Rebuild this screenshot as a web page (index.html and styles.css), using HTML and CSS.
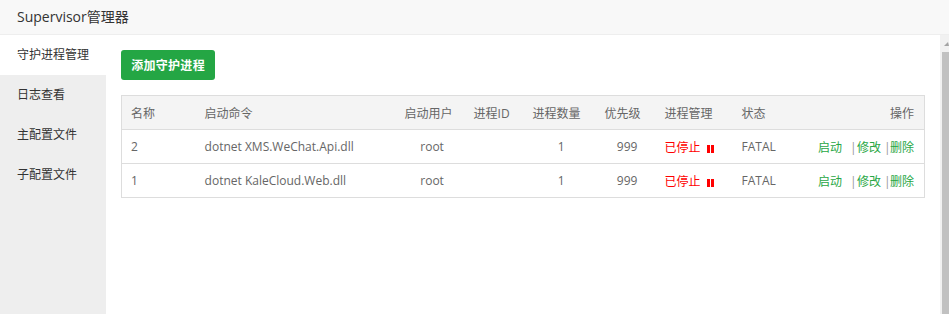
FILE: index.html
```html
<!DOCTYPE html>
<html lang="zh-CN">
<head>
  <meta charset="UTF-8">
  <title>Supervisor管理器</title>
  <link rel="stylesheet" href="styles.css">
</head>
<body>

<div class="dialog">
  <div class="dialog-title">Supervisor管理器</div>

  <div class="dialog-body">
    <ul class="side-nav">
      <li class="active">守护进程管理</li>
      <li>日志查看</li>
      <li>主配置文件</li>
      <li>子配置文件</li>
    </ul>

    <div class="main">
      <button class="btn-add">添加守护进程</button>

      <table class="proc-table">
        <colgroup>
          <col style="width:74px">
          <col style="width:200px">
          <col style="width:64px">
          <col style="width:64px">
          <col style="width:66px">
          <col style="width:66px">
          <col style="width:77px">
          <col style="width:67px">
          <col style="width:125px">
        </colgroup>
        <thead>
          <tr>
            <th>名称</th>
            <th>启动命令</th>
            <th class="center">启动用户</th>
            <th class="center">进程ID</th>
            <th class="center">进程数量</th>
            <th class="center">优先级</th>
            <th>进程管理</th>
            <th>状态</th>
            <th class="right">操作</th>
          </tr>
        </thead>
        <tbody>
          <tr>
            <td>2</td>
            <td>dotnet XMS.WeChat.Api.dll</td>
            <td class="center">root</td>
            <td class="center"></td>
            <td class="center">1</td>
            <td class="center">999</td>
            <td><span class="stopped">已停止</span><span class="pause-icon"></span></td>
            <td>FATAL</td>
            <td class="right"><a href="#">启动</a><span class="sep sep-wide">|</span><a href="#">修改</a><span class="sep">|</span><a href="#">删除</a></td>
          </tr>
          <tr>
            <td>1</td>
            <td>dotnet KaleCloud.Web.dll</td>
            <td class="center">root</td>
            <td class="center"></td>
            <td class="center">1</td>
            <td class="center">999</td>
            <td><span class="stopped">已停止</span><span class="pause-icon"></span></td>
            <td>FATAL</td>
            <td class="right"><a href="#">启动</a><span class="sep sep-wide">|</span><a href="#">修改</a><span class="sep">|</span><a href="#">删除</a></td>
          </tr>
        </tbody>
      </table>
    </div>

    <div class="scrollbar">
      <span class="scroll-up"></span>
      <span class="scroll-thumb"></span>
    </div>
  </div>
</div>

</body>
</html>
```

FILE: styles.css
```css
html, body { margin: 0; height: 100%; }
body {
  font-family: "Open Sans", "Noto Sans CJK SC", sans-serif;
  font-size: 12px;
  color: #333;
  background: #fff;
  overflow: hidden;
}

.dialog {
  display: flex;
  flex-direction: column;
  height: 314px;
}
.dialog-title {
  height: 34px;
  line-height: 34px;
  padding-left: 17px;
  font-size: 14px;
  color: #333;
  background: #f8f8f8;
  border-bottom: 1px solid #eee;
}
.dialog-body {
  flex: 1;
  display: flex;
  min-height: 0;
}

.side-nav {
  list-style: none;
  margin: 0;
  padding: 0;
  width: 107px;
  background: #eee;
}
.side-nav li {
  height: 40px;
  line-height: 40px;
  padding-left: 17px;
  color: #333;
  cursor: pointer;
}
.side-nav li.active {
  background: #fff;
}

.main {
  flex: 1;
  padding: 15px;
  background: #fff;
}
.btn-add {
  display: block;
  width: 94px;
  height: 30px;
  padding: 0;
  border: none;
  border-radius: 3px;
  background: #24a644;
  color: #fff;
  font-family: inherit;
  font-size: 12px;
  font-weight: bold;
  letter-spacing: 0.3px;
  cursor: pointer;
}

.proc-table {
  margin-top: 15px;
  width: 803px;
  table-layout: fixed;
  border-collapse: collapse;
  border: 1px solid #ddd;
  color: #666;
}
.proc-table th,
.proc-table td {
  height: 33px;
  padding: 0 9px;
  text-align: left;
  font-weight: normal;
  white-space: nowrap;
  border-bottom: 1px solid #ddd;
}
.proc-table th {
  background: #f4f4f4;
}
.proc-table .center { text-align: center; }
.proc-table td.center { padding: 0 3px 0 12px; }
.proc-table .right { text-align: right; padding-right: 10px; }

.stopped { color: #f00; }
.pause-icon {
  display: inline-block;
  width: 7px;
  height: 8px;
  margin-left: 6px;
  background: linear-gradient(to right, #f00 0, #f00 3px, transparent 3px, transparent 4px, #f00 4px);
  vertical-align: -1px;
}

.proc-table a {
  color: #28a745;
  text-decoration: none;
}
.sep {
  display: inline-block;
  width: 3px;
  text-align: center;
  color: #999;
  margin: 0 3px;
}
.sep-wide { margin: 0 4px 0 8px; }

.scrollbar {
  width: 9px;
  background: #f1f1f1;
  display: flex;
  flex-direction: column;
  align-items: flex-end;
}
.scroll-up {
  margin-top: 7px;
  width: 0;
  height: 0;
  border-left: 4px solid transparent;
  border-right: 1px solid transparent;
  border-bottom: 4px solid #a3a3a3;
}
.scroll-thumb {
  margin-top: 6px;
  flex: 1;
  width: 7px;
  background: #c1c1c1;
}
```
